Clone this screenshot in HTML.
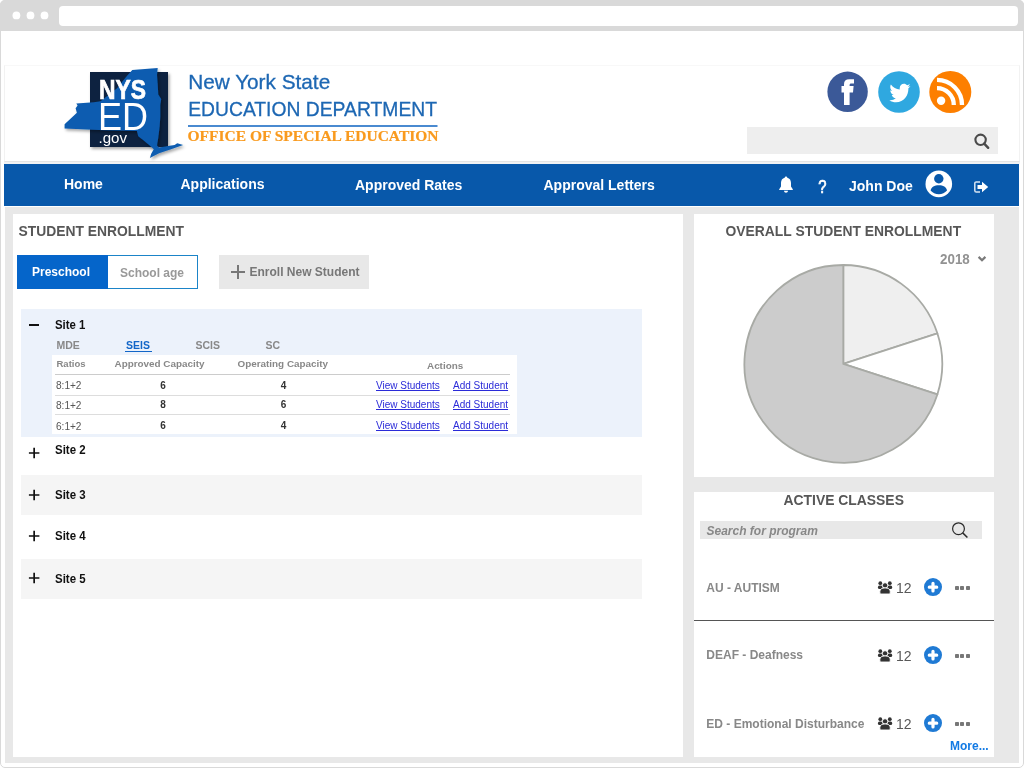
<!DOCTYPE html>
<html><head><meta charset="utf-8">
<style>
*{margin:0;padding:0;box-sizing:border-box}
html,body{width:1024px;height:768px;overflow:hidden;background:#fff;font-family:"Liberation Sans",sans-serif}
.a{position:absolute;white-space:nowrap}
svg.a{overflow:visible}
body{will-change:transform}
</style></head><body>
<div class="a" style="left:0;top:0;width:1024px;height:768px;border:1px solid #d9d9d9;border-radius:5px"></div>
<div class="a" style="left:0;top:0;width:1024px;height:31px;background:#d9d9d9;border-radius:5px 5px 0 0"></div>
<svg class="a" style="left:0;top:0" width="60" height="31"><circle cx="16.4" cy="15.4" r="3.9" fill="#fff"/><circle cx="30.5" cy="15.4" r="3.9" fill="#fff"/><circle cx="44.5" cy="15.4" r="3.9" fill="#fff"/></svg>
<div class="a" style="left:59px;top:6px;width:959px;height:20px;background:#fff;border-radius:4px"></div>
<div class="a" style="left:4px;top:65px;width:1016px;height:97px;border:1px solid #f2f2f2;border-top-color:#f8f8f8;border-bottom:1px solid #e4e4e4"></div>
<div class="a" style="left:4px;top:162px;width:1016px;height:2px;background:#f1f2f4;"></div>
<svg class="a" style="left:0;top:60px" width="460" height="104" viewBox="0 60 460 104">
 <defs><filter id="sh" x="-20%" y="-20%" width="140%" height="140%"><feDropShadow dx="1.5" dy="2" stdDeviation="1.5" flood-color="#000" flood-opacity="0.35"/></filter></defs>
 <rect x="90" y="72" width="78" height="75" fill="#0b2341" filter="url(#sh)"/>
 <path filter="url(#sh)" fill="#0c5cb0" d="M132.3,70.1 L157.7,67.9 L157,75 L157.6,82.8 L158.3,94.6 L161.2,99 L160.3,105 L160.3,116.7 L159.6,127.1 L158.3,137.6 L157,145.4 L159,147.6 L174.6,145 L177.2,143.2 L183.1,145.1 L173.3,148.6 L159,153.2 L149.9,158.1 L151.2,153.8 L153.8,149.3 L151.2,146.7 L143.4,140.2 L138.2,136.2 L136.9,131 L99,130 L64.6,128.4 L64.6,124.3 L76.9,112.8 L75.6,108.2 L77.6,105.6 L76.3,103.4 L93.9,102.2 L100.5,101.3 L117,88.2 L126,77 Z"/>
 <text x="99" y="98.5" font-family="Liberation Sans" font-weight="bold" font-size="27" fill="#fff" stroke="#fff" stroke-width="0.7" textLength="47" lengthAdjust="spacingAndGlyphs">NYS</text>
 <text x="98" y="130.4" font-family="Liberation Sans" font-size="39" fill="#fff" textLength="50" lengthAdjust="spacingAndGlyphs">ED</text>
 <text x="98.5" y="142.8" font-family="Liberation Sans" font-size="14" fill="#fff" textLength="28.5" lengthAdjust="spacingAndGlyphs">.gov</text>
 <text x="188.2" y="88.9" font-family="Liberation Sans" font-size="20.3" fill="#1d67b3" stroke="#1d67b3" stroke-width="0.3" textLength="142" lengthAdjust="spacingAndGlyphs">New York State</text>
 <text x="188.2" y="116.2" font-family="Liberation Sans" font-size="21" fill="#1d67b3" stroke="#1d67b3" stroke-width="0.3" textLength="248.8" lengthAdjust="spacingAndGlyphs">EDUCATION DEPARTMENT</text>
 <rect x="188" y="125" width="249.5" height="2" fill="#4a8ad0"/>
 <text x="187.5" y="141" font-family="Liberation Serif" font-weight="bold" font-size="15.2" fill="#f99a1e" stroke="#f99a1e" stroke-width="0.2" textLength="251" lengthAdjust="spacingAndGlyphs">OFFICE OF SPECIAL EDUCATION</text>
</svg>
<svg class="a" style="left:820px;top:65px" width="160" height="55" viewBox="820 65 160 55">
 <circle cx="847.6" cy="91.8" r="20.2" fill="#3b5998"/>
 <path fill="#fff" d="M844,104.9 V92.4 H841.5 V86.1 H844 V84.2 C844,80.8 845.8,79.2 849.2,79.2 H854 V83.6 H851.4 C850,83.6 849.6,84.1 849.6,85.3 V86.1 H853.6 L853,92.4 H849.6 V104.9 Z"/>
 <circle cx="899" cy="92" r="20.8" fill="#2fa8e0"/>
 <path fill="#fff" transform="translate(889.3,81.6) scale(0.88,0.95)" d="M24,4.6 C23.1,5 22.2,5.2 21.2,5.3 C22.2,4.7 23,3.8 23.3,2.6 C22.4,3.2 21.4,3.6 20.3,3.8 C19.4,2.8 18.1,2.2 16.7,2.2 C14,2.2 11.8,4.4 11.8,7.1 C11.8,7.5 11.8,7.9 11.9,8.2 C7.8,8 4.2,6.1 1.8,3.1 C1.4,3.8 1.1,4.7 1.1,5.6 C1.1,7.3 2,8.8 3.3,9.7 C2.5,9.7 1.7,9.4 1.1,9.1 V9.2 C1.1,11.6 2.8,13.6 5,14 C4.6,14.1 4.2,14.2 3.7,14.2 C3.4,14.2 3.1,14.2 2.8,14.1 C3.4,16.1 5.2,17.5 7.4,17.5 C5.7,18.8 3.6,19.6 1.3,19.6 C0.9,19.6 0.5,19.6 0.1,19.5 C2.3,20.9 4.9,21.7 7.7,21.7 C16.7,21.7 21.7,14.2 21.7,7.7 V7.1 C22.6,6.4 23.4,5.6 24,4.6 Z"/>
 <circle cx="950.3" cy="92" r="21" fill="#fd7f00"/>
 <circle cx="941.1" cy="100.8" r="4.2" fill="#fff"/>
 <path fill="none" stroke="#fff" stroke-width="4.3" d="M937,88.1 A16.8,16.8 0 0 1 953.8,104.9"/>
 <path fill="none" stroke="#fff" stroke-width="4.3" d="M937,79.9 A25,25 0 0 1 962,104.9"/>
</svg>
<div class="a" style="left:747px;top:127px;width:251px;height:27px;background:#eeeeee;"></div>
<svg class="a" style="left:972px;top:132px" width="20" height="20" viewBox="0 0 20 20">
 <circle cx="8.6" cy="7.8" r="5.2" fill="none" stroke="#4a4a4a" stroke-width="2.1"/>
 <path d="M12.2,11.6 L16.2,15.8" stroke="#4a4a4a" stroke-width="2.4" stroke-linecap="round"/>
</svg>
<div class="a" style="left:4px;top:164px;width:1015px;height:42px;background:#0858aa;"></div>
<div class="a" style="left:64px;top:176.85px;font-size:14px;line-height:14px;color:#fff;font-weight:bold;">Home</div>
<div class="a" style="left:180.5px;top:177.15px;font-size:14px;line-height:14px;color:#fff;font-weight:bold;">Applications</div>
<div class="a" style="left:355px;top:178.15px;font-size:14px;line-height:14px;color:#fff;font-weight:bold;">Approved Rates</div>
<div class="a" style="left:543.5px;top:178.15px;font-size:14px;line-height:14px;color:#fff;font-weight:bold;">Approval Letters</div>
<div class="a" style="left:849px;top:179.15px;font-size:14px;line-height:14px;color:#fff;font-weight:bold;">John Doe</div>
<svg class="a" style="left:810px;top:172px" width="30" height="26" viewBox="810 172 30 26"><text transform="translate(818.2,192.6) scale(0.8,1)" font-family="Liberation Sans" font-size="18.5" fill="#fff" stroke="#fff" stroke-width="0.7">?</text></svg>
<svg class="a" style="left:776px;top:174px" width="20" height="20" viewBox="0 0 20 20">
 <path fill="#fff" d="M10,2.5 C10.8,2.5 11.3,3.1 11.3,3.8 C13.8,4.4 15,6.4 15,9 V12.5 L16.8,15.2 V16 H3.2 V15.2 L5,12.5 V9 C5,6.4 6.2,4.4 8.7,3.8 C8.7,3.1 9.2,2.5 10,2.5 Z M8,16.8 H12 C12,18 11.1,18.7 10,18.7 C8.9,18.7 8,18 8,16.8 Z"/>
</svg>
<svg class="a" style="left:924px;top:169px" width="30" height="30" viewBox="0 0 30 30">
 <circle cx="14.8" cy="14.9" r="13.3" fill="#fff"/>
 <circle cx="14.8" cy="9.7" r="4.7" fill="#0858aa"/>
 <path fill="#0858aa" d="M6.6,21.6 C7.2,17.9 10.5,16.2 14.8,16.2 C19.1,16.2 22.4,17.9 23,21.6 C21,24 18.1,25.2 14.8,25.2 C11.5,25.2 8.6,24 6.6,21.6 Z"/>
</svg>
<svg class="a" style="left:972px;top:180px" width="18" height="14" viewBox="0 0 18 14">
 <path fill="none" stroke="#fff" stroke-opacity="0.85" stroke-width="1.5" d="M8,1.9 H4.4 C3.4,1.9 2.8,2.5 2.8,3.5 V10.4 C2.8,11.4 3.4,12 4.4,12 H8"/>
 <path fill="#fff" d="M5.5,5 H10 V1.8 L16.2,7 L10,12.2 V9 H5.5 Z"/>
</svg>
<div class="a" style="left:5px;top:207px;width:1014px;height:556px;background:#e8e8e8;"></div>
<div class="a" style="left:13px;top:214px;width:670px;height:543px;background:#fff;"></div>
<div class="a" style="left:694px;top:214px;width:300px;height:263px;background:#fff;"></div>
<div class="a" style="left:694px;top:492px;width:300px;height:265px;background:#fff;"></div>
<div class="a" style="left:18.5px;top:224.86px;font-size:13.87px;line-height:13.87px;color:#575757;font-weight:bold;">STUDENT ENROLLMENT</div>
<div class="a" style="left:17px;top:255px;width:91px;height:34px;background:#0565ca;"></div>
<div class="a" style="left:32px;top:265.84px;font-size:12px;line-height:12px;color:#fff;font-weight:bold;">Preschool</div>
<div class="a" style="left:108px;top:255px;width:90px;height:34px;border:1px solid #1b84c8;border-left:none;background:#fff"></div>
<div class="a" style="left:120px;top:267.44px;font-size:12px;line-height:12px;color:#999;font-weight:bold;">School age</div>
<div class="a" style="left:219px;top:255px;width:150px;height:34px;background:#e8e8e8;"></div>
<div class="a" style="left:231px;top:271px;width:14px;height:2px;background:#777;"></div>
<div class="a" style="left:237px;top:265px;width:2px;height:14px;background:#777;"></div>
<div class="a" style="left:249.5px;top:265.84px;font-size:12px;line-height:12px;color:#777;font-weight:bold;">Enroll New Student</div>
<div class="a" style="left:21px;top:309px;width:621px;height:128px;background:#ecf2fb;"></div>
<div class="a" style="left:29px;top:323.5px;width:10px;height:2.5px;background:#111;"></div>
<div class="a" style="left:54.5px;top:319.04px;font-size:12px;line-height:12px;color:#111;font-weight:bold;transform:scaleX(0.95);transform-origin:0 0">Site 1</div>
<div class="a" style="left:56.5px;top:340.11px;font-size:10.5px;line-height:10.5px;color:#888;font-weight:bold;">MDE</div>
<div class="a" style="left:126px;top:340.11px;font-size:10.5px;line-height:10.5px;color:#1266c8;font-weight:bold;">SEIS</div>
<div class="a" style="left:195.5px;top:340.11px;font-size:10.5px;line-height:10.5px;color:#888;font-weight:bold;">SCIS</div>
<div class="a" style="left:265.5px;top:340.11px;font-size:10.5px;line-height:10.5px;color:#888;font-weight:bold;">SC</div>
<div class="a" style="left:125px;top:350.8px;width:27px;height:1.4px;background:#1266c8;"></div>
<div class="a" style="left:52px;top:355px;width:465px;height:79px;background:#fff;"></div>
<div class="a" style="left:56.5px;top:358.96px;font-size:9.5px;line-height:9.5px;color:#888;font-weight:bold;">Ratios</div>
<div class="a" style="left:114.5px;top:358.62px;font-size:9.9px;line-height:9.9px;color:#888;font-weight:bold;">Approved Capacity</div>
<div class="a" style="left:237.5px;top:358.62px;font-size:9.9px;line-height:9.9px;color:#888;font-weight:bold;">Operating Capacity</div>
<div class="a" style="left:427px;top:360.62px;font-size:9.9px;line-height:9.9px;color:#888;font-weight:bold;">Actions</div>
<div class="a" style="left:55px;top:374px;width:455px;height:1px;background:#ccc;"></div>
<div class="a" style="left:55px;top:395px;width:455px;height:1px;background:#ddd;"></div>
<div class="a" style="left:55px;top:414px;width:455px;height:1px;background:#ddd;"></div>
<div class="a" style="left:56px;top:380.03px;font-size:10.6px;line-height:10.6px;color:#555;transform:scaleX(0.95);transform-origin:0 0">8:1+2</div>
<div class="a" style="left:143px;top:380.54px;font-size:10px;line-height:10px;color:#333;font-weight:bold;width:40px;text-align:center">6</div>
<div class="a" style="left:263.5px;top:380.54px;font-size:10px;line-height:10px;color:#333;font-weight:bold;width:40px;text-align:center">4</div>
<div class="a" style="left:376px;top:380.54px;font-size:10px;line-height:10px;color:#2b2bd8;text-decoration:underline">View Students</div>
<div class="a" style="left:453px;top:380.54px;font-size:10px;line-height:10px;color:#2b2bd8;text-decoration:underline">Add Student</div>
<div class="a" style="left:56px;top:399.93px;font-size:10.6px;line-height:10.6px;color:#555;transform:scaleX(0.95);transform-origin:0 0">8:1+2</div>
<div class="a" style="left:143px;top:400.44px;font-size:10px;line-height:10px;color:#333;font-weight:bold;width:40px;text-align:center">8</div>
<div class="a" style="left:263.5px;top:400.44px;font-size:10px;line-height:10px;color:#333;font-weight:bold;width:40px;text-align:center">6</div>
<div class="a" style="left:376px;top:400.44px;font-size:10px;line-height:10px;color:#2b2bd8;text-decoration:underline">View Students</div>
<div class="a" style="left:453px;top:400.44px;font-size:10px;line-height:10px;color:#2b2bd8;text-decoration:underline">Add Student</div>
<div class="a" style="left:56px;top:420.53px;font-size:10.6px;line-height:10.6px;color:#555;transform:scaleX(0.95);transform-origin:0 0">6:1+2</div>
<div class="a" style="left:143px;top:421.04px;font-size:10px;line-height:10px;color:#333;font-weight:bold;width:40px;text-align:center">6</div>
<div class="a" style="left:263.5px;top:421.04px;font-size:10px;line-height:10px;color:#333;font-weight:bold;width:40px;text-align:center">4</div>
<div class="a" style="left:376px;top:421.04px;font-size:10px;line-height:10px;color:#2b2bd8;text-decoration:underline">View Students</div>
<div class="a" style="left:453px;top:421.04px;font-size:10px;line-height:10px;color:#2b2bd8;text-decoration:underline">Add Student</div>
<svg class="a" style="left:28px;top:446.8px" width="12" height="12"><path d="M0.9,6 H11.4 M6.15,0.8 V11.2" stroke="#111" stroke-width="1.7"/></svg>
<div class="a" style="left:54.5px;top:444.07px;font-size:12.2px;line-height:12.2px;color:#111;font-weight:bold;transform:scaleX(0.94);transform-origin:0 0">Site 2</div>
<div class="a" style="left:21px;top:475px;width:621px;height:40px;background:#f5f5f5;"></div>
<svg class="a" style="left:28px;top:488.8px" width="12" height="12"><path d="M0.9,6 H11.4 M6.15,0.8 V11.2" stroke="#111" stroke-width="1.7"/></svg>
<div class="a" style="left:54.5px;top:489.37px;font-size:12.2px;line-height:12.2px;color:#111;font-weight:bold;transform:scaleX(0.94);transform-origin:0 0">Site 3</div>
<svg class="a" style="left:28px;top:530.4px" width="12" height="12"><path d="M0.9,6 H11.4 M6.15,0.8 V11.2" stroke="#111" stroke-width="1.7"/></svg>
<div class="a" style="left:54.5px;top:530.07px;font-size:12.2px;line-height:12.2px;color:#111;font-weight:bold;transform:scaleX(0.94);transform-origin:0 0">Site 4</div>
<div class="a" style="left:21px;top:559px;width:621px;height:40px;background:#f5f5f5;"></div>
<svg class="a" style="left:28px;top:572.3px" width="12" height="12"><path d="M0.9,6 H11.4 M6.15,0.8 V11.2" stroke="#111" stroke-width="1.7"/></svg>
<div class="a" style="left:54.5px;top:572.97px;font-size:12.2px;line-height:12.2px;color:#111;font-weight:bold;transform:scaleX(0.94);transform-origin:0 0">Site 5</div>
<div class="a" style="left:725.5px;top:225.05px;font-size:13.88px;line-height:13.88px;color:#575757;font-weight:bold;">OVERALL STUDENT ENROLLMENT</div>
<div class="a" style="left:939.9px;top:252.01px;font-size:14.4px;line-height:14.4px;color:#929292;font-weight:bold;transform:scaleX(0.93);transform-origin:0 0">2018</div>
<svg class="a" style="left:976px;top:254px" width="12" height="10" viewBox="0 0 12 10"><path d="M2.6,2.9 L6,6.3 L9.4,2.9" fill="none" stroke="#7a7a7a" stroke-width="2.2"/></svg>
<svg class="a" style="left:694px;top:214px" width="300" height="263" viewBox="694 214 300 263">
 <path d="M843.3,363.9 L843.30,265.00 A98.9,98.9 0 0 1 937.36,333.34 Z" fill="#efefef" stroke="#a8aaa5" stroke-width="1.8" stroke-linejoin="round"/>
 <path d="M843.3,363.9 L937.36,333.34 A98.9,98.9 0 0 1 937.36,394.46 Z" fill="#fff" stroke="#a8aaa5" stroke-width="1.8" stroke-linejoin="round"/>
 <path d="M843.3,363.9 L937.36,394.46 A98.9,98.9 0 1 1 843.30,265.00 Z" fill="#cccccc" stroke="#a8aaa5" stroke-width="1.8" stroke-linejoin="round"/>
</svg>
<div class="a" style="left:783.5px;top:493.83px;font-size:13.9px;line-height:13.9px;color:#575757;font-weight:bold;">ACTIVE CLASSES</div>
<div class="a" style="left:700px;top:521px;width:282px;height:18px;background:#e8e8e8;"></div>
<div class="a" style="left:706.5px;top:524.64px;font-size:12px;line-height:12px;color:#888;font-weight:bold;font-style:italic">Search for program</div>
<svg class="a" style="left:948px;top:520px" width="24" height="22" viewBox="0 0 24 22">
 <circle cx="10.5" cy="8.7" r="5.9" fill="none" stroke="#2a2a2a" stroke-width="1.2"/>
 <path d="M14.7,12.9 L19.4,17.5" stroke="#2a2a2a" stroke-width="1.5"/>
</svg>
<div class="a" style="left:706.3px;top:581.94px;font-size:12px;line-height:12px;color:#888;font-weight:bold;">AU - AUTISM</div>
<svg class="a" style="left:877px;top:580.0px" width="16" height="15" viewBox="0 0 16 15"><g fill="#333"><circle cx="3.3" cy="3.2" r="1.9"/><circle cx="12.8" cy="3.2" r="1.9"/><rect x="0.9" y="5.6" width="4.8" height="3.4" rx="1.6"/><rect x="10.4" y="5.6" width="4.8" height="3.4" rx="1.6"/><circle cx="8.05" cy="5.4" r="2.7" stroke="#fff" stroke-width="0.9"/><path stroke="#fff" stroke-width="0.9" d="M2.9,13 V11.2 C2.9,9.2 4.8,7.9 8.05,7.9 C11.3,7.9 13.2,9.2 13.2,11.2 V13 C13.2,13.6 12.8,14 12.2,14 H3.9 C3.3,14 2.9,13.6 2.9,13 Z"/></g></svg>
<div class="a" style="left:896px;top:581.35px;font-size:14px;line-height:14px;color:#585858;">12</div>
<svg class="a" style="left:923px;top:577.8px" width="20" height="19" viewBox="0 0 20 19">
 <circle cx="10" cy="9.1" r="9" fill="#1f7ad4"/>
 <path d="M10,5.3 V13 M6.3,9.15 H13.7" stroke="#fff" stroke-width="3.2" stroke-linecap="round"/>
</svg>
<div class="a" style="left:954.9px;top:585.5px;width:4.2px;height:4.2px;background:#777;border-radius:0.8px"></div>
<div class="a" style="left:960.2px;top:585.5px;width:4.2px;height:4.2px;background:#777;border-radius:0.8px"></div>
<div class="a" style="left:965.5px;top:585.5px;width:4.2px;height:4.2px;background:#777;border-radius:0.8px"></div>
<div class="a" style="left:706.3px;top:649.44px;font-size:12px;line-height:12px;color:#888;font-weight:bold;">DEAF - Deafness</div>
<svg class="a" style="left:877px;top:648.2px" width="16" height="15" viewBox="0 0 16 15"><g fill="#333"><circle cx="3.3" cy="3.2" r="1.9"/><circle cx="12.8" cy="3.2" r="1.9"/><rect x="0.9" y="5.6" width="4.8" height="3.4" rx="1.6"/><rect x="10.4" y="5.6" width="4.8" height="3.4" rx="1.6"/><circle cx="8.05" cy="5.4" r="2.7" stroke="#fff" stroke-width="0.9"/><path stroke="#fff" stroke-width="0.9" d="M2.9,13 V11.2 C2.9,9.2 4.8,7.9 8.05,7.9 C11.3,7.9 13.2,9.2 13.2,11.2 V13 C13.2,13.6 12.8,14 12.2,14 H3.9 C3.3,14 2.9,13.6 2.9,13 Z"/></g></svg>
<div class="a" style="left:896px;top:648.85px;font-size:14px;line-height:14px;color:#585858;">12</div>
<svg class="a" style="left:923px;top:646.0px" width="20" height="19" viewBox="0 0 20 19">
 <circle cx="10" cy="9.1" r="9" fill="#1f7ad4"/>
 <path d="M10,5.3 V13 M6.3,9.15 H13.7" stroke="#fff" stroke-width="3.2" stroke-linecap="round"/>
</svg>
<div class="a" style="left:954.9px;top:653.7px;width:4.2px;height:4.2px;background:#777;border-radius:0.8px"></div>
<div class="a" style="left:960.2px;top:653.7px;width:4.2px;height:4.2px;background:#777;border-radius:0.8px"></div>
<div class="a" style="left:965.5px;top:653.7px;width:4.2px;height:4.2px;background:#777;border-radius:0.8px"></div>
<div class="a" style="left:706.3px;top:718.04px;font-size:12px;line-height:12px;color:#888;font-weight:bold;">ED - Emotional Disturbance</div>
<svg class="a" style="left:877px;top:716.0px" width="16" height="15" viewBox="0 0 16 15"><g fill="#333"><circle cx="3.3" cy="3.2" r="1.9"/><circle cx="12.8" cy="3.2" r="1.9"/><rect x="0.9" y="5.6" width="4.8" height="3.4" rx="1.6"/><rect x="10.4" y="5.6" width="4.8" height="3.4" rx="1.6"/><circle cx="8.05" cy="5.4" r="2.7" stroke="#fff" stroke-width="0.9"/><path stroke="#fff" stroke-width="0.9" d="M2.9,13 V11.2 C2.9,9.2 4.8,7.9 8.05,7.9 C11.3,7.9 13.2,9.2 13.2,11.2 V13 C13.2,13.6 12.8,14 12.2,14 H3.9 C3.3,14 2.9,13.6 2.9,13 Z"/></g></svg>
<div class="a" style="left:896px;top:717.45px;font-size:14px;line-height:14px;color:#585858;">12</div>
<svg class="a" style="left:923px;top:713.8px" width="20" height="19" viewBox="0 0 20 19">
 <circle cx="10" cy="9.1" r="9" fill="#1f7ad4"/>
 <path d="M10,5.3 V13 M6.3,9.15 H13.7" stroke="#fff" stroke-width="3.2" stroke-linecap="round"/>
</svg>
<div class="a" style="left:954.9px;top:721.5px;width:4.2px;height:4.2px;background:#777;border-radius:0.8px"></div>
<div class="a" style="left:960.2px;top:721.5px;width:4.2px;height:4.2px;background:#777;border-radius:0.8px"></div>
<div class="a" style="left:965.5px;top:721.5px;width:4.2px;height:4.2px;background:#777;border-radius:0.8px"></div>
<div class="a" style="left:694px;top:620px;width:300px;height:1px;background:#555;"></div>
<div class="a" style="left:950px;top:740.24px;font-size:12px;line-height:12px;color:#127ae4;font-weight:bold;">More...</div>
</body></html>
